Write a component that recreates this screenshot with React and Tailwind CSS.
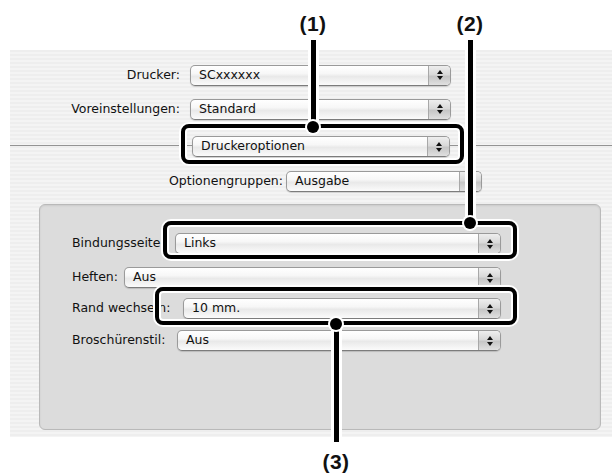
import React from 'react';

const stripes =
  'bg-[repeating-linear-gradient(180deg,#eeeeee_0px,#eeeeee_2px,#f4f4f4_2px,#f4f4f4_4px)]';

function Arrows() {
  return (
    <svg width="8" height="12" viewBox="0 0 8 12">
      <path d="M4 1 L7 5 L1 5 Z" fill="#111" />
      <path d="M4 11 L7 7 L1 7 Z" fill="#111" />
    </svg>
  );
}

function Popup({ value, className = '' }) {
  return (
    <div
      className={`flex h-[21px] items-stretch rounded-[5px] border border-[#9a9a9a] border-b-[#7c7c7c] bg-[linear-gradient(#ffffff,#f7f7f7_40%,#e9e9e9_55%,#fbfbfb)] shadow-[0_1px_1px_rgba(0,0,0,0.15)] ${className}`}
    >
      <div className="flex flex-1 items-center pl-[8px] text-[12.5px] text-[#111] leading-none whitespace-nowrap overflow-hidden">
        {value}
      </div>
      <div className="flex w-[22px] items-center justify-center rounded-r-[4px] border-l border-[#a8a8a8] bg-[linear-gradient(#eeeeee,#d9d9d9_45%,#c6c6c6_55%,#e0e0e0)]">
        <Arrows />
      </div>
    </div>
  );
}

function GroupRow({ label, labelW, value, className = '' }) {
  return (
    <div className={`flex h-[21px] w-[429px] items-center ${className}`}>
      <div
        className="shrink-0 whitespace-nowrap text-[12.5px] text-[#111]"
        style={{ width: labelW }}
      >
        {label}
      </div>
      <Popup value={value} className="flex-1" />
    </div>
  );
}

export default function App() {
  return (
    <div className="relative h-[475px] w-[612px] overflow-hidden bg-white font-['DejaVu_Sans',sans-serif]">
      {/* dialog panel */}
      <div className={`ml-[10px] mt-[50px] h-[387px] pt-[14px] ${stripes}`}>
        <div className="flex h-[22px] items-center">
          <div className="w-[170px] text-right text-[12.5px] text-[#111]">Drucker:</div>
          <Popup value="SCxxxxxx" className="ml-[10px] w-[261px]" />
        </div>
        <div className="mt-[12px] flex h-[22px] items-center">
          <div className="w-[170px] text-right text-[12.5px] text-[#111]">Voreinstellungen:</div>
          <Popup value="Standard" className="ml-[10px] w-[261px]" />
        </div>

        {/* separator with pane menu */}
        <div className="mt-[16px] flex h-[22px] items-start">
          <div className="mt-[9px] h-px w-[182px] bg-[#939393]" />
          <Popup value="Druckeroptionen" className="w-[258px]" />
          <div className="mt-[9px] h-px flex-1 bg-[#939393]" />
        </div>

        <div className="mt-[12px] flex h-[22px] items-center">
          <div className="w-[273px] text-right text-[12.5px] text-[#111]">Optionengruppen:</div>
          <Popup value="Ausgabe" className="ml-[3px] w-[196px]" />
        </div>

        {/* group box */}
        <div className="ml-[29px] mt-[12px] h-[226px] w-[562px] rounded-[6px] border border-[#b9b9b9] bg-[#dcdcdc] pl-[32px] pt-[28px] shadow-[inset_0_1px_2px_rgba(0,0,0,0.08)]">
          <GroupRow label="Bindungsseite:" labelW={103} value="Links" />
          <GroupRow label="Heften:" labelW={52} value="Aus" className="mt-[13px]" />
          <GroupRow label="Rand wechseln:" labelW={111} value="10 mm." className="mt-[10px]" />
          <GroupRow label="Broschürenstil:" labelW={105} value="Aus" className="mt-[11px]" />
        </div>
      </div>

      {/* callouts */}
      <div className="absolute left-[311px] top-[40px] h-[88px] w-[5px] bg-black shadow-[0_0_0_3px_#fff]" />
      <div className="absolute left-[468px] top-[40px] h-[184px] w-[5px] bg-black shadow-[0_0_0_3px_#fff]" />
      <div className="absolute left-[334px] top-[323px] h-[119px] w-[5px] bg-black shadow-[0_0_0_3px_#fff]" />

      <div className="absolute left-[181px] top-[124px] h-[40px] w-[283px] rounded-[8px] border-[4px] border-black shadow-[0_0_0_2px_#fff,inset_0_0_0_2px_#fff]" />
      <div className="absolute left-[163px] top-[221px] h-[38px] w-[354px] rounded-[8px] border-[4px] border-black shadow-[0_0_0_2px_#fff,inset_0_0_0_2px_#fff]" />
      <div className="absolute left-[155px] top-[287px] h-[38px] w-[362px] rounded-[8px] border-[4px] border-black shadow-[0_0_0_2px_#fff,inset_0_0_0_2px_#fff]" />

      <div className="absolute left-[307px] top-[121px] h-[12px] w-[12px] rounded-full bg-black shadow-[0_0_0_2px_#fff]" />
      <div className="absolute left-[464px] top-[217px] h-[12px] w-[12px] rounded-full bg-black shadow-[0_0_0_2px_#fff]" />
      <div className="absolute left-[330px] top-[318px] h-[12px] w-[12px] rounded-full bg-black shadow-[0_0_0_2px_#fff]" />

      <div className="absolute left-[288px] top-[11px] w-[50px] text-center font-['Liberation_Sans',Arial,sans-serif] text-[21px] font-bold leading-[26px] tracking-[0.5px] text-[#111]">(1)</div>
      <div className="absolute left-[445px] top-[11px] w-[50px] text-center font-['Liberation_Sans',Arial,sans-serif] text-[21px] font-bold leading-[26px] tracking-[0.5px] text-[#111]">(2)</div>
      <div className="absolute left-[311px] top-[449px] w-[50px] text-center font-['Liberation_Sans',Arial,sans-serif] text-[21px] font-bold leading-[26px] tracking-[0.5px] text-[#111]">(3)</div>
    </div>
  );
}
